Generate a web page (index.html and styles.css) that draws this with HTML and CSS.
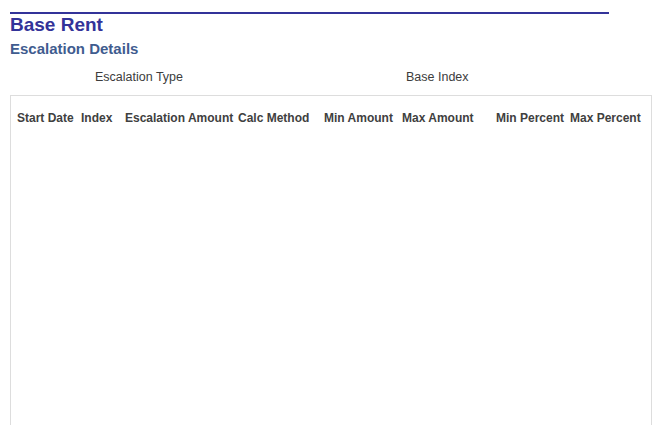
FILE: index.html
```html
<!DOCTYPE html>
<html>
<head>
<meta charset="utf-8">
<link rel="stylesheet" href="styles.css">
</head>
<body>
<div class="page">
  <div class="rule"></div>
  <h1 class="title">Base Rent</h1>
  <h2 class="subtitle">Escalation Details</h2>
  <div class="fields">
    <span class="field-label type">Escalation Type</span>
    <span class="field-label base">Base Index</span>
  </div>
  <div class="grid-box">
    <div class="grid-head">
      <span class="col">Start Date</span>
      <span class="col">Index</span>
      <span class="col">Escalation Amount</span>
      <span class="col">Calc Method</span>
      <span class="col">Min Amount</span>
      <span class="col">Max Amount</span>
      <span class="col">Min Percent</span>
      <span class="col">Max Percent</span>
    </div>
  </div>
</div>
</body>
</html>
```
FILE: styles.css
```css
html, body {
  margin: 0;
  padding: 0;
  background: #ffffff;
}
body {
  font-family: "Liberation Sans", Arial, sans-serif;
  overflow: hidden;
}
.page {
  padding: 12px 0 0 10px;
}
.rule {
  width: 599px;
  height: 2px;
  background: #333399;
}
.title {
  margin: 0;
  font-size: 19px;
  line-height: 22px;
  font-weight: bold;
  color: #333399;
}
.subtitle {
  margin: 4px 0 0 0;
  font-size: 15px;
  line-height: 18px;
  font-weight: bold;
  color: #3f5c8f;
}
.fields {
  display: grid;
  grid-template-columns: 311px auto;
  margin: 12px 0 0 85px;
  font-size: 12.5px;
  line-height: 15px;
  color: #3c3c3c;
}
.grid-box {
  margin-top: 10px;
  width: 640px;
  height: 400px;
  border: 1px solid #dddddd;
  box-sizing: content-box;
}
.grid-head {
  display: grid;
  grid-template-columns: 64px 44px 113px 86px 78px 94px 74px auto;
  padding: 15px 0 0 6px;
  font-size: 12px;
  line-height: 15px;
  font-weight: bold;
  color: #404040;
  white-space: nowrap;
}
```
